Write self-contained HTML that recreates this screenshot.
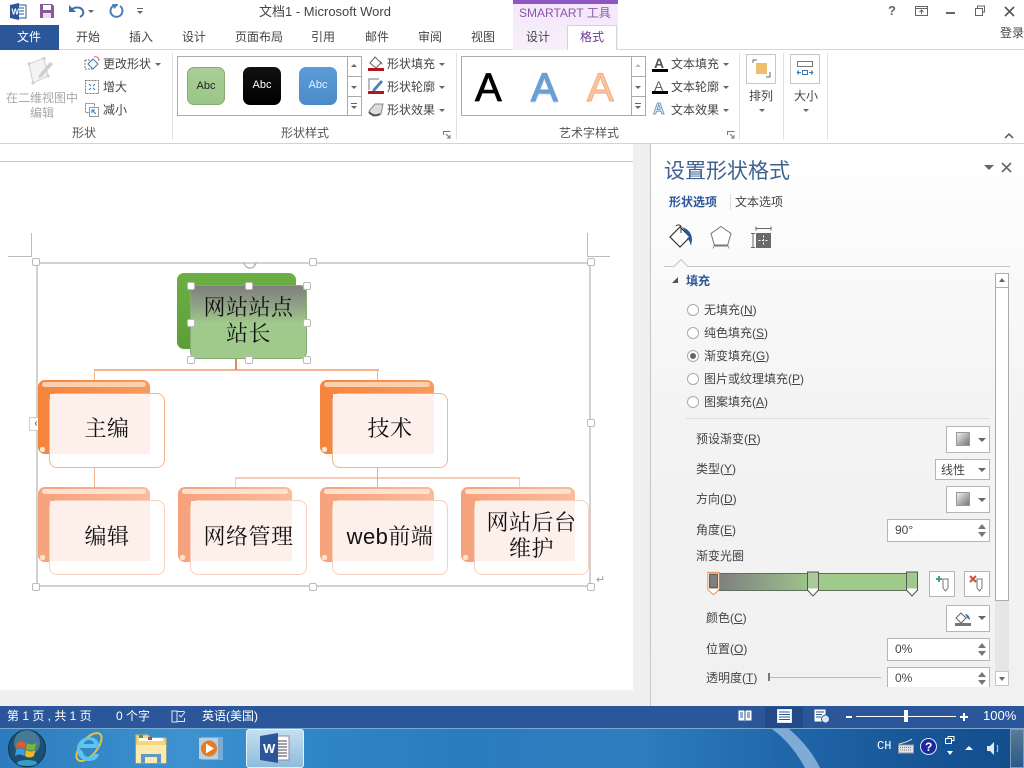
<!DOCTYPE html>
<html lang="zh"><head><meta charset="utf-8"><title>文档1 - Microsoft Word</title>
<style>
html,body{margin:0;padding:0;width:1024px;height:768px;overflow:hidden;background:#fff}
body{position:relative;font:12px/16px "Liberation Sans","Noto Sans CJK SC",sans-serif;color:#444}
div,svg{position:absolute;box-sizing:border-box}
.t{white-space:nowrap;height:16px}
u{text-decoration:underline}
.g{color:#a8a8a8}
.tab{top:29px}
.box{border:1px solid #ababab;background:#fff}
.sep{width:1px;top:53px;height:87px;background:#e1e1e1}
.lab{top:125px;color:#555;text-align:center}
.ar{width:0;height:0;border-left:3px solid transparent;border-right:3px solid transparent;border-top:3px solid #666}
.abc{width:38px;height:38px;border-radius:7px;text-align:center;line-height:36px;font-size:11px;top:67px}
.h{width:8px;height:8px;background:#fff;border:1px solid #bbb;border-radius:2px}
.back{border-radius:7px;overflow:hidden}
.front{border-radius:8px;background:#fff;border:1px solid #f2b58f}
.inner{background:#fdf0ea}
.sa{font:22px/26px "Noto Serif CJK SC","Noto Sans CJK SC",serif;color:#111;text-align:center;letter-spacing:.5px;white-space:nowrap}
.radio{width:12px;height:12px;border:1px solid #aaa;border-radius:50%;background:#fff;left:687px}
.bt{background:#fff;border:1px solid #b5b5b5}
.spin{left:887px;width:103px;background:#fff;border:1px solid #b5b5b5;padding-left:7px;line-height:20px}
.up,.dn{width:0;height:0;left:90px;border-left:4px solid transparent;border-right:4px solid transparent}
.up{top:4px;border-bottom:5px solid #777}.dn{top:12px;border-top:5px solid #777}
.stop{top:570px;width:13px;height:28px}
.w{color:#fff}
.cr{left:2px;width:5px;height:5px;border-radius:2px;background:#fde6c8}
</style></head><body>

<!-- Title bar / tabs -->
<div style="left:0;top:49px;width:1024px;height:1px;background:#d4d4d4"></div>
<div style="left:513px;top:0;width:105px;height:50px;background:linear-gradient(#f3e6fa,#f7f0fb)"></div>
<div style="left:513px;top:0;width:105px;height:4px;background:#8e56c4"></div>
<div style="left:567px;top:25px;width:50px;height:25px;background:#fff;border:1px solid #d4d4d4;border-bottom:0"></div>
<div style="left:0;top:25px;width:59px;height:25px;background:#2b579a"></div>

<svg style="left:9px;top:3px" width="18" height="17" viewBox="0 0 18 17"><rect x="5" y="2" width="12" height="13" fill="#fff" stroke="#2b579a"/><path d="M10 5h5M10 8h5M10 11h5" stroke="#2b579a"/><path d="M1 2l9-2v17l-9-2z" fill="#2b579a"/><text x="2.5" y="11.5" font-size="8" font-weight="bold" fill="#fff" font-family="Liberation Sans">W</text></svg>
<svg style="left:39px;top:3px" width="16" height="16" viewBox="0 0 16 16"><path d="M1 1h12l2 2v12H1z" fill="#87589e"/><rect x="4" y="2" width="8" height="5" fill="#fff"/><rect x="4" y="10" width="8" height="5" fill="#e8dcee"/></svg>
<svg style="left:68px;top:3px" width="18" height="16" viewBox="0 0 18 16"><path d="M3 7c3-3 10-4 12 1 1 3-1 5-3 6" fill="none" stroke="#3d6ea8" stroke-width="2"/><path d="M1 2v7h7z" fill="#3d6ea8"/></svg>
<div class="ar" style="left:88px;top:10px"></div>
<svg style="left:108px;top:3px" width="16" height="16" viewBox="0 0 16 16"><path d="M5 3a6 6 0 1 0 7 0" fill="none" stroke="#4a7fb8" stroke-width="2"/><path d="M4 1h6v1l-4 4z" fill="#4a7fb8"/></svg>
<div style="left:137px;top:8px;width:6px;height:1px;background:#666"></div>
<div class="ar" style="left:137px;top:11px"></div>

<div class="t" style="left:259px;top:4px;font-size:13px;color:#444">文档1 - Microsoft Word</div>
<div class="t" style="left:519px;top:5px;color:#8a56ad;font-size:12px">SMARTART 工具</div>

<div class="t" style="left:888px;top:3px;font-weight:bold;font-size:13px;color:#666">?</div>
<svg style="left:914px;top:5px" width="16" height="12" viewBox="0 0 16 12"><rect x="1.5" y="1.5" width="12" height="9" fill="none" stroke="#666"/><path d="M1 3.5h13" stroke="#666"/><path d="M7.5 9V5M5.5 7l2-2 2 2" fill="none" stroke="#666"/></svg>
<div style="left:946px;top:12px;width:9px;height:2px;background:#666"></div>
<svg style="left:974px;top:5px" width="12" height="12" viewBox="0 0 12 12"><path d="M3.5 3V1h7v6H8M1.5 3.5h7v7h-7z" fill="none" stroke="#666"/></svg>
<svg style="left:1004px;top:6px" width="11" height="11" viewBox="0 0 11 11"><path d="M1 1l9 9M10 1l-9 9" stroke="#555" stroke-width="1.6"/></svg>
<div class="t" style="left:1000px;top:25px">登录</div>

<div class="t tab w" style="left:17px">文件</div>
<div class="t tab" style="left:76px">开始</div>
<div class="t tab" style="left:129px">插入</div>
<div class="t tab" style="left:182px">设计</div>
<div class="t tab" style="left:235px">页面布局</div>
<div class="t tab" style="left:311px">引用</div>
<div class="t tab" style="left:365px">邮件</div>
<div class="t tab" style="left:418px">审阅</div>
<div class="t tab" style="left:471px">视图</div>
<div class="t tab" style="left:526px">设计</div>
<div class="t tab" style="left:580px;color:#6b3a96">格式</div>

<!-- Ribbon -->
<div style="left:0;top:143px;width:1024px;height:1px;background:#d4d4d4"></div>
<div class="sep" style="left:172px"></div>
<div class="sep" style="left:456px"></div>
<div class="sep" style="left:739px"></div>
<div class="sep" style="left:783px"></div>
<div class="sep" style="left:827px"></div>

<svg style="left:26px;top:56px" width="30" height="30" viewBox="0 0 30 30"><path d="M3 8l15-6 4 18-15 7z" fill="#f4f4f4" stroke="#d0d0d0"/><path d="M13 19l11-13 3 2-11 13-4 1z" fill="#cfcfcf"/><circle cx="3" cy="8" r="1.6" fill="#cfcfcf"/><circle cx="18" cy="2.5" r="1.6" fill="#cfcfcf"/><circle cx="7" cy="27" r="1.6" fill="#cfcfcf"/><circle cx="22" cy="20" r="1.6" fill="#cfcfcf"/></svg>
<div class="t g" style="left:6px;top:90px">在二维视图中</div>
<div class="t g" style="left:30px;top:105px">编辑</div>
<svg style="left:84px;top:56px" width="16" height="16" viewBox="0 0 16 16"><path d="M1 4h6M1 4v9h7" fill="none" stroke="#777" stroke-dasharray="2 1"/><path d="M9 3l5 5-5 5-5-5z" fill="#fff" stroke="#3a78b0"/><path d="M10 1c3-1 5 1 5 4" fill="none" stroke="#c96a50"/></svg>
<div class="t" style="left:103px;top:56px">更改形状</div><div class="ar" style="left:155px;top:63px"></div>
<svg style="left:84px;top:79px" width="16" height="16" viewBox="0 0 16 16"><rect x="1.5" y="1.5" width="13" height="13" fill="none" stroke="#777" stroke-dasharray="2 1"/><path d="M5 5l2 2M11 5L9 7M5 11l2-2M11 11L9 9" stroke="#3a78b0"/></svg>
<div class="t" style="left:103px;top:79px">增大</div>
<svg style="left:84px;top:102px" width="16" height="16" viewBox="0 0 16 16"><path d="M1.5 1.5h9v9h-9z" fill="none" stroke="#777" stroke-dasharray="2 1"/><rect x="5.5" y="5.5" width="9" height="9" fill="#fff" stroke="#999"/><path d="M12 12L8 8M8 11V8h3" fill="none" stroke="#3a78b0"/></svg>
<div class="t" style="left:103px;top:102px">减小</div>
<div class="t lab" style="left:72px">形状</div>

<div class="box" style="left:177px;top:56px;width:185px;height:60px"></div>
<div class="abc" style="left:187px;background:linear-gradient(#a8cf97,#9bc588);border:1px solid #86ab74;color:#222">Abc</div>
<div class="abc" style="left:243px;background:linear-gradient(#111,#000);color:#fff">Abc</div>
<div class="abc" style="left:299px;background:linear-gradient(#5b9cd8,#4a8bc8);color:#eaf3fb">Abc</div>
<div class="box" style="left:347px;top:56px;width:15px;height:21px"></div>
<div class="box" style="left:347px;top:77px;width:15px;height:20px;border-top:0"></div>
<div class="box" style="left:347px;top:96px;width:15px;height:20px"></div>
<div style="left:351px;top:64px;border-left:3px solid transparent;border-right:3px solid transparent;border-bottom:3px solid #666"></div>
<div class="ar" style="left:351px;top:86px"></div>
<div style="left:351px;top:103px;width:6px;height:1px;background:#666"></div><div class="ar" style="left:351px;top:106px"></div>

<svg style="left:368px;top:55px" width="17" height="17" viewBox="0 0 17 17"><path d="M2 8l5-6 6 6-5 5z" fill="#fff" stroke="#666"/><path d="M12 6c2 1 3 3 2 4z" fill="#3d6ea8"/><rect x="0" y="13" width="16" height="3" fill="#b5141c"/></svg>
<div class="t" style="left:387px;top:56px">形状填充</div><div class="ar" style="left:439px;top:63px"></div>
<svg style="left:368px;top:78px" width="17" height="17" viewBox="0 0 17 17"><path d="M1 12V1h10" fill="none" stroke="#777"/><path d="M5 11l8-9 2 2-8 9-3 1z" fill="#4a7fb8"/><rect x="0" y="13" width="16" height="3" fill="#b5141c"/></svg>
<div class="t" style="left:387px;top:79px">形状轮廓</div><div class="ar" style="left:439px;top:86px"></div>
<svg style="left:368px;top:102px" width="16" height="16" viewBox="0 0 16 16"><path d="M1 9l6-7h8l-2 10-8 2z" fill="#ddd" stroke="#888"/><path d="M1 10c3 4 8 4 11 2" fill="none" stroke="#555" stroke-width="2"/></svg>
<div class="t" style="left:387px;top:102px">形状效果</div><div class="ar" style="left:439px;top:109px"></div>
<div class="t lab" style="left:281px">形状样式</div>
<svg style="left:443px;top:131px" width="8" height="8" viewBox="0 0 8 8"><path d="M.5 4V.5H7.500M3 3l4 4M4 7h3V4" fill="none" stroke="#777"/></svg>

<div class="box" style="left:461px;top:56px;width:185px;height:60px"></div>
<div class="t" style="left:475px;top:66px;height:44px;font-size:40px;line-height:44px;color:#000;-webkit-text-stroke:.8px #000">A</div>
<div class="t" style="left:531px;top:66px;height:44px;font-size:40px;line-height:44px;color:#6a9fd0;-webkit-text-stroke:1.2px #6a9fd0;text-shadow:0 1px 2px #9cc3e6">A</div>
<div class="t" style="left:587px;top:66px;height:44px;font-size:40px;line-height:44px;color:#f9c6a2;-webkit-text-stroke:1.2px #f3b288">A</div>
<div class="box" style="left:631px;top:56px;width:15px;height:21px"></div>
<div class="box" style="left:631px;top:77px;width:15px;height:20px;border-top:0"></div>
<div class="box" style="left:631px;top:96px;width:15px;height:20px"></div>
<div style="left:635px;top:64px;border-left:3px solid transparent;border-right:3px solid transparent;border-bottom:3px solid #bbb"></div>
<div class="ar" style="left:635px;top:86px"></div>
<div style="left:635px;top:103px;width:6px;height:1px;background:#666"></div><div class="ar" style="left:635px;top:106px"></div>

<div class="t" style="left:654px;top:55px;font-size:14px;font-weight:bold;color:#555">A</div>
<div style="left:652px;top:69px;width:16px;height:3px;background:#000"></div>
<div class="t" style="left:671px;top:56px">文本填充</div><div class="ar" style="left:723px;top:63px"></div>
<div class="t" style="left:654px;top:78px;font-size:14px;color:#666">A</div>
<div style="left:652px;top:91px;width:16px;height:3px;background:#000"></div>
<div class="t" style="left:671px;top:79px">文本轮廓</div><div class="ar" style="left:723px;top:86px"></div>
<div class="t" style="left:653px;top:102px;font-size:16px;font-weight:bold;color:#d8e8f6;-webkit-text-stroke:.7px #4f87bd">A</div>
<div class="t" style="left:671px;top:102px">文本效果</div><div class="ar" style="left:723px;top:109px"></div>
<div class="t lab" style="left:559px">艺术字样式</div>
<svg style="left:727px;top:131px" width="8" height="8" viewBox="0 0 8 8"><path d="M.5 4V.5H7.500M3 3l4 4M4 7h3V4" fill="none" stroke="#777"/></svg>

<div class="box" style="left:746px;top:54px;width:30px;height:30px;border-color:#c6c6c6"></div>
<svg style="left:752px;top:59px" width="20" height="20" viewBox="0 0 20 20"><path d="M1 4V1h4M18 13v5h-4" fill="none" stroke="#666"/><rect x="4" y="4" width="11" height="11" fill="#eebd6e"/></svg>
<div class="t" style="left:749px;top:88px">排列</div><div class="ar" style="left:759px;top:109px"></div>
<div class="box" style="left:790px;top:54px;width:30px;height:30px;border-color:#c6c6c6"></div>
<svg style="left:796px;top:60px" width="18" height="18" viewBox="0 0 18 18"><rect x="1.500" y="1.500" width="15" height="5" fill="#fff" stroke="#777"/><rect x="6.500" y="10.500" width="5" height="4" fill="none" stroke="#3a78b0"/><path d="M1 12.500h4M13 12.500h4M1 12.500l2-2M1 12.500l2 2M17 12.500l-2-2M17 12.500l-2 2" stroke="#3a78b0" fill="none"/></svg>
<div class="t" style="left:794px;top:88px">大小</div><div class="ar" style="left:803px;top:109px"></div>
<svg style="left:1004px;top:132px" width="10" height="7" viewBox="0 0 10 7"><path d="M1 6l4-4 4 4" fill="none" stroke="#555" stroke-width="1.500"/></svg>

<!-- Document area -->
<div style="left:633px;top:144px;width:18px;height:562px;background:#efefef"></div>
<div style="left:0;top:690px;width:651px;height:16px;background:#efefef"></div>
<div style="left:0;top:161px;width:633px;height:1px;background:#c9c9c9"></div>
<div style="left:8px;top:256px;width:23px;height:1px;background:#bbb"></div>
<div style="left:31px;top:233px;width:1px;height:24px;background:#bbb"></div>
<div style="left:587px;top:256px;width:23px;height:1px;background:#bbb"></div>
<div style="left:587px;top:233px;width:1px;height:24px;background:#bbb"></div>

<!-- SmartArt frame -->
<div style="left:36px;top:262px;width:555px;height:325px;border:2px solid #d2d2d2;background:#fff"></div>
<div class="h" style="left:32px;top:258px"></div><div class="h" style="left:309px;top:258px"></div><div class="h" style="left:587px;top:258px"></div>
<div class="h" style="left:587px;top:419px"></div>
<div class="h" style="left:32px;top:583px"></div><div class="h" style="left:309px;top:583px"></div><div class="h" style="left:587px;top:583px"></div>
<div style="left:29px;top:417px;width:14px;height:14px;background:#fff;border:1px solid #ccc;color:#777;font-size:10px;line-height:12px;text-align:center;font-weight:bold">‹</div>
<svg style="left:242px;top:262px" width="16" height="10" viewBox="0 0 16 10"><path d="M2 0a6 6 0 0 0 12 0M12 3l2-2" fill="none" stroke="#bbb" stroke-width="1.500"/></svg>
<div style="left:596px;top:574px;color:#999;font-size:11px;line-height:12px">↵</div>

<!-- Connectors -->
<div style="left:94px;top:369px;width:285px;height:2px;background:#f0b493"></div>
<div style="left:235px;top:359px;width:2px;height:11px;background:#e8885a"></div>
<div style="left:94px;top:370px;width:1px;height:12px;background:#f0b493"></div>
<div style="left:377px;top:370px;width:1px;height:12px;background:#f0b493"></div>
<div style="left:94px;top:467px;width:1px;height:22px;background:#f0b493"></div>
<div style="left:235px;top:477px;width:285px;height:2px;background:#f6cdb6"></div>
<div style="left:377px;top:467px;width:1px;height:22px;background:#eba98a"></div>
<div style="left:235px;top:478px;width:1px;height:10px;background:#f6cdb6"></div>
<div style="left:519px;top:478px;width:1px;height:10px;background:#f6cdb6"></div>

<!-- Top node -->
<div class="back" style="left:177px;top:273px;width:119px;height:76px;background:linear-gradient(#6cb044,#5a9e36)"></div>
<div style="left:190px;top:285px;width:117px;height:74px;border-radius:7px;border:1px solid #86ab74;background:linear-gradient(#7f7f7f 0%,#8f9f84 25%,#a0c98c 52%,#a0c98c 100%)"></div>
<div class="sa" style="left:190px;top:294px;width:117px">网站站点</div>
<div class="sa" style="left:190px;top:320px;width:117px">站长</div>
<div class="h" style="left:187px;top:282px"></div><div class="h" style="left:245px;top:282px"></div><div class="h" style="left:303px;top:282px"></div>
<div class="h" style="left:187px;top:319px"></div><div class="h" style="left:303px;top:319px"></div>
<div class="h" style="left:187px;top:356px"></div><div class="h" style="left:245px;top:356px"></div><div class="h" style="left:303px;top:356px"></div>

<!-- Row 2 -->
<div class="back" style="left:38px;top:380px;width:112px;height:74px;background:linear-gradient(90deg,#f5843c,#f89a5e)"><div style="left:4px;top:2px;width:104px;height:5px;border-radius:3px;background:#fbd0ae"></div><div class="cr" style="top:67px"></div></div>
<div class="front" style="left:49px;top:393px;width:116px;height:75px"></div>
<div class="inner" style="left:50px;top:394px;width:100px;height:60px"></div>
<div class="sa" style="left:49px;top:415px;width:116px">主编</div>

<div class="back" style="left:320px;top:380px;width:114px;height:74px;background:linear-gradient(90deg,#f5843c,#f89a5e)"><div style="left:4px;top:2px;width:106px;height:5px;border-radius:3px;background:#fbd0ae"></div><div class="cr" style="top:67px"></div></div>
<div class="front" style="left:332px;top:393px;width:116px;height:75px"></div>
<div class="inner" style="left:333px;top:394px;width:101px;height:60px"></div>
<div class="sa" style="left:332px;top:415px;width:116px">技术</div>

<!-- Row 3 -->
<div class="back" style="left:38px;top:487px;width:112px;height:75px;background:linear-gradient(90deg,#f6a17c,#fabb9d)"><div style="left:4px;top:2px;width:104px;height:5px;border-radius:3px;background:#fde0cd"></div><div class="cr" style="top:68px"></div></div>
<div class="front" style="left:49px;top:500px;width:116px;height:75px;border-color:#f7d0bb"></div>
<div class="inner" style="left:50px;top:501px;width:100px;height:60px"></div>
<div class="sa" style="left:49px;top:523px;width:116px">编辑</div>

<div class="back" style="left:178px;top:487px;width:114px;height:75px;background:linear-gradient(90deg,#f6a17c,#fabb9d)"><div style="left:4px;top:2px;width:106px;height:5px;border-radius:3px;background:#fde0cd"></div><div class="cr" style="top:68px"></div></div>
<div class="front" style="left:190px;top:500px;width:117px;height:75px;border-color:#f7d0bb"></div>
<div class="inner" style="left:191px;top:501px;width:101px;height:60px"></div>
<div class="sa" style="left:190px;top:523px;width:117px">网络管理</div>

<div class="back" style="left:320px;top:487px;width:114px;height:75px;background:linear-gradient(90deg,#f6a17c,#fabb9d)"><div style="left:4px;top:2px;width:106px;height:5px;border-radius:3px;background:#fde0cd"></div><div class="cr" style="top:68px"></div></div>
<div class="front" style="left:332px;top:500px;width:116px;height:75px;border-color:#f7d0bb"></div>
<div class="inner" style="left:333px;top:501px;width:101px;height:60px"></div>
<div class="sa" style="left:332px;top:523px;width:116px"><span style="font-family:'Liberation Sans',sans-serif">web</span>前端</div>

<div class="back" style="left:461px;top:487px;width:114px;height:75px;background:linear-gradient(90deg,#f6a17c,#fabb9d)"><div style="left:4px;top:2px;width:106px;height:5px;border-radius:3px;background:#fde0cd"></div><div class="cr" style="top:68px"></div></div>
<div class="front" style="left:474px;top:500px;width:115px;height:75px;border-color:#f7d0bb"></div>
<div class="inner" style="left:475px;top:501px;width:100px;height:60px"></div>
<div class="sa" style="left:474px;top:509px;width:115px">网站后台</div>
<div class="sa" style="left:474px;top:535px;width:115px">维护</div>

<!-- Right pane -->
<div style="left:650px;top:144px;width:374px;height:562px;background:linear-gradient(#fff,#f3f3f3 50%,#f1f1f1);border-left:1px solid #c6c6c6"></div>
<div class="t" style="left:664px;top:158px;height:28px;font-size:21px;line-height:28px;color:#3f6391">设置形状格式</div>
<div class="ar" style="left:984px;top:165px;border-left-width:5px;border-right-width:5px;border-top-width:5px"></div>
<svg style="left:1001px;top:162px" width="11" height="11" viewBox="0 0 11 11"><path d="M1 1l9 9M10 1l-9 9" stroke="#666" stroke-width="1.600"/></svg>
<div class="t" style="left:669px;top:194px;font-weight:bold;color:#2b579a">形状选项</div>
<div style="left:730px;top:194px;width:1px;height:16px;background:#ddd"></div>
<div class="t" style="left:735px;top:194px">文本选项</div>
<svg style="left:668px;top:224px" width="26" height="26" viewBox="0 0 26 26"><path d="M2 13l10-10 10 10-10 10z" fill="#fff" stroke="#333" stroke-width="1.200"/><path d="M8 2c2-2 5-1 5 1v6" fill="none" stroke="#333"/><path d="M14 3c6 2 10 6 10 13l-1 6c-1-4-2-6-4-8l2-1z" fill="#2b579a"/></svg>
<svg style="left:709px;top:225px" width="24" height="24" viewBox="0 0 24 24"><path d="M12 1.500l10 7-3.500 12h-13L2 8.500z" fill="#fff" stroke="#777"/><path d="M5 20.500h14" stroke="#777" stroke-width="2"/><path d="M5 20.500l-1 3M19 20.500l1 3" stroke="#999"/></svg>
<svg style="left:750px;top:226px" width="22" height="23" viewBox="0 0 22 23"><path d="M6 2.500h15M6 .5v4M21 .500v4M1 7.500h4M1 21.500h4M3 7.500v14" fill="none" stroke="#666"/><rect x="6" y="7" width="15" height="15" fill="#6a6a6a"/><path d="M13.500 9.500v10M8.500 14.500h10" stroke="#fff" stroke-dasharray="2 1.500"/></svg>
<svg style="left:664px;top:256px" width="346" height="11" viewBox="0 0 346 11"><path d="M0 10.500h10l7-7 7 7h322" fill="none" stroke="#c4c4c4"/></svg>
<div style="left:672px;top:277px;border-left:6px solid transparent;border-bottom:6px solid #555"></div>
<div class="t" style="left:686px;top:273px;font-weight:bold;color:#2b579a">填充</div>

<div class="radio" style="top:304px"></div><div class="t" style="left:704px;top:302px">无填充(<u>N</u>)</div>
<div class="radio" style="top:327px"></div><div class="t" style="left:704px;top:325px">纯色填充(<u>S</u>)</div>
<div class="radio" style="top:350px"></div><div style="left:690px;top:353px;width:6px;height:6px;border-radius:50%;background:#666"></div><div class="t" style="left:704px;top:348px">渐变填充(<u>G</u>)</div>
<div class="radio" style="top:373px"></div><div class="t" style="left:704px;top:371px">图片或纹理填充(<u>P</u>)</div>
<div class="radio" style="top:396px"></div><div class="t" style="left:704px;top:394px">图案填充(<u>A</u>)</div>
<div style="left:686px;top:418px;width:304px;height:1px;background:#dedede"></div>

<div class="t" style="left:696px;top:431px">预设渐变(<u>R</u>)</div>
<div class="bt" style="left:946px;top:426px;width:44px;height:27px"></div>
<div style="left:956px;top:432px;width:14px;height:14px;background:linear-gradient(135deg,#eee,#777);border:1px solid #999"></div><div class="ar" style="left:978px;top:438px;border-left-width:4px;border-right-width:4px;border-top-width:4px"></div>
<div class="t" style="left:696px;top:461px">类型(<u>Y</u>)</div>
<div class="bt" style="left:935px;top:459px;width:55px;height:21px;padding-left:5px;line-height:20px">线性</div><div class="ar" style="left:978px;top:468px;border-left-width:4px;border-right-width:4px;border-top-width:4px"></div>
<div class="t" style="left:696px;top:491px">方向(<u>D</u>)</div>
<div class="bt" style="left:946px;top:486px;width:44px;height:27px"></div>
<div style="left:956px;top:492px;width:14px;height:14px;background:linear-gradient(135deg,#eee,#777);border:1px solid #999"></div><div class="ar" style="left:978px;top:498px;border-left-width:4px;border-right-width:4px;border-top-width:4px"></div>
<div class="t" style="left:696px;top:522px">角度(<u>E</u>)</div>
<div class="spin" style="top:519px;height:23px">90°<div class="up"></div><div class="dn"></div></div>
<div class="t" style="left:696px;top:548px">渐变光圈</div>

<div style="left:714px;top:573px;width:204px;height:18px;border:1px solid #5d6e5a;background:linear-gradient(90deg,#7f7f7f 0%,#7f7f7f 2%,#a0c98c 50%,#a0c98c 100%)"></div>
<svg class="stop" style="left:707px" width="15" height="29" viewBox="0 0 15 29"><path d="M1 1h13v20l-6.500 6L1 21z" fill="#fff" stroke="#e8833a"/><rect x="3" y="3" width="9" height="16" fill="#7f7f7f" stroke="#444"/></svg>
<svg class="stop" style="left:807px;top:571px" width="13" height="27" viewBox="0 0 13 27"><path d="M.5 .5h11v18l-5.500 6-5.500-6z" fill="#fff" stroke="#555"/><rect x="1" y="1" width="10" height="16" fill="#a9cb99"/></svg>
<svg class="stop" style="left:906px;top:571px" width="13" height="27" viewBox="0 0 13 27"><path d="M.5 .5h11v18l-5.500 6-5.500-6z" fill="#fff" stroke="#555"/><rect x="1" y="1" width="10" height="16" fill="#a0c98c"/></svg>
<div class="bt" style="left:929px;top:571px;width:26px;height:26px"></div>
<svg style="left:935px;top:575px" width="15" height="18" viewBox="0 0 15 18"><path d="M8 4h5v9l-2.500 3L8 13z" fill="#fff" stroke="#777"/><path d="M4 1v6M1 4h6" stroke="#4d9a86" stroke-width="2"/></svg>
<div class="bt" style="left:964px;top:571px;width:26px;height:26px"></div>
<svg style="left:969px;top:575px" width="15" height="18" viewBox="0 0 15 18"><path d="M8 4h5v9l-2.500 3L8 13z" fill="#fff" stroke="#777"/><path d="M1 1l6 6M7 1L1 7" stroke="#c8503c" stroke-width="2"/></svg>
<div class="t" style="left:706px;top:610px">颜色(<u>C</u>)</div>
<div class="bt" style="left:946px;top:605px;width:44px;height:27px"></div>
<svg style="left:955px;top:610px" width="17" height="17" viewBox="0 0 17 17"><path d="M1 8l5-5 5 5-5 5z" fill="#fff" stroke="#666"/><path d="M10 4c3 0 5 3 5 6l-3-2z" fill="#4e74a8"/><rect x="0" y="13" width="16" height="3" fill="#777"/></svg>
<div class="ar" style="left:978px;top:616px;border-left-width:4px;border-right-width:4px;border-top-width:4px"></div>
<div class="t" style="left:706px;top:641px">位置(<u>O</u>)</div>
<div class="spin" style="top:638px;height:23px">0%<div class="up"></div><div class="dn"></div></div>
<div class="t" style="left:706px;top:670px">透明度(<u>T</u>)</div>
<div style="left:768px;top:673px;width:2px;height:8px;background:#777"></div>
<div style="left:770px;top:677px;width:111px;height:1px;background:#bbb"></div>
<div class="spin" style="top:667px;height:20px;border-bottom:0">0%<div class="up"></div><div class="dn"></div></div>

<!-- Pane scrollbar -->
<div style="left:995px;top:273px;width:14px;height:413px;background:#e6e6e6"></div>
<div style="left:995px;top:273px;width:14px;height:328px;background:#fff;border:1px solid #ababab"></div>
<div style="left:995px;top:273px;width:14px;height:15px;background:#fff;border:1px solid #ababab"></div>
<div style="left:999px;top:278px;border-left:3px solid transparent;border-right:3px solid transparent;border-bottom:4px solid #666"></div>
<div style="left:995px;top:671px;width:14px;height:15px;background:#fff;border:1px solid #c6c6c6"></div>
<div class="ar" style="left:999px;top:677px;border-top-width:4px"></div>

<!-- Status bar -->
<div style="left:0;top:706px;width:1024px;height:22px;background:#2b579a"></div>
<div class="t w" style="left:7px;top:708px">第 1 页 , 共 1 页</div>
<div class="t w" style="left:116px;top:708px">0 个字</div>
<svg style="left:171px;top:710px" width="15" height="13" viewBox="0 0 15 13"><path d="M1 1h5v11H1zM6.500 1.500h7M6.500 11.500h7M13.500 8v4" fill="none" stroke="#dfe7f3"/><path d="M8 5l2 2 4-5" fill="none" stroke="#dfe7f3"/></svg>
<div class="t w" style="left:202px;top:708px">英语(美国)</div>
<svg style="left:738px;top:709px" width="14" height="14" viewBox="0 0 14 14"><path d="M.5 1.500h5.500l1 1 1-1h5.500v10H8l-1 1-1-1H.5z" fill="#fff"/><path d="M2 4h3M2 6h3M2 8h3M9 4h3M9 6h3M9 8h3M7 2v10" stroke="#2b579a" fill="none"/></svg>
<div style="left:765px;top:707px;width:38px;height:21px;background:#224a87"></div>
<svg style="left:777px;top:709px" width="15" height="14" viewBox="0 0 15 14"><rect x=".5" y=".5" width="14" height="13" fill="#fff" stroke="#dfe7f3"/><path d="M2 3h11M2 5.500h11M2 8h11M2 10.500h11" stroke="#2b579a"/></svg>
<svg style="left:814px;top:709px" width="16" height="15" viewBox="0 0 16 15"><rect x=".5" y=".5" width="11" height="12" fill="#fff"/><path d="M2 3h8M2 5.500h6M2 8h5" stroke="#2b579a"/><circle cx="11.500" cy="10" r="4" fill="#dfe7f3" stroke="#2b579a"/></svg>
<div style="left:846px;top:716px;width:6px;height:2px;background:#fff"></div>
<div style="left:856px;top:716px;width:100px;height:1px;background:#fff"></div>
<div style="left:904px;top:710px;width:4px;height:12px;background:#fff"></div>
<div style="left:960px;top:716px;width:8px;height:2px;background:#fff"></div><div style="left:963px;top:713px;width:2px;height:8px;background:#fff"></div>
<div class="t w" style="left:983px;top:708px;font-size:13px">100%</div>

<!-- Taskbar -->
<div style="left:0;top:728px;width:1024px;height:40px;background:linear-gradient(90deg,#2c7cbd 0%,#3d92cf 18%,#2f86c8 30%,#2a7cc0 45%,#2e7dbd 62%,#1f65a8 78%,#175596 90%,#134d8c 100%);border-top:1px solid #7aa9d0"></div>
<svg style="left:772px;top:729px" width="50" height="39" viewBox="0 0 50 39"><path d="M0 0h17c12 10 24 24 31 39H33C25 24 14 10 0 0z" fill="#a7cbe8" opacity=".7"/></svg>

<svg style="left:7px;top:729px" width="40" height="39" viewBox="0 0 40 39"><circle cx="20" cy="19.500" r="18.500" fill="#1d4f72" stroke="#0f3450"/><circle cx="20" cy="14" r="13" fill="#5a8aa5" opacity=".7"/><path d="M10 14c3-2 6-2 9 0l-1 6c-3-2-6-2-9 0z" fill="#e05a2a"/><path d="M20 14c3 2 6 2 9 0l-1 6c-3 2-6 2-9 0z" fill="#7ab82e"/><path d="M9 21c3-2 6-2 9 0l-1 6c-3-2-6-2-9 0z" fill="#3d9be0"/><path d="M19 21c3 2 6 2 9 0l-1 6c-3 2-6 2-9 0z" fill="#f4b81e"/><ellipse cx="20" cy="34" rx="10" ry="3" fill="#3db0d8" opacity=".8"/></svg>
<svg style="left:73px;top:730px" width="32" height="34" viewBox="0 0 32 34"><ellipse cx="16" cy="17" rx="17" ry="8" transform="rotate(-50 16 17)" fill="none" stroke="#e6c33c" stroke-width="2"/><path d="M6 18h20c1-7-4-11-10-11S4 12 4 19c0 8 6 12 12 12 5 0 9-2 10-7h-6c-1 2-2 3-4 3-3 0-6-2-6-5zM11 14c0-2 2-4 5-4s5 2 5 4z" fill="#5dc4ee" fill-rule="evenodd"/></svg>
<svg style="left:134px;top:733px" width="34" height="32" viewBox="0 0 34 32"><path d="M2 2h12l2 3h16v25H2z" fill="#f3d67e" stroke="#d6b45c"/><rect x="5" y="5" width="24" height="3" fill="#fff"/><path d="M2 12h30v18H2z" fill="#fbe9ae"/><rect x="5" y="2" width="4" height="3" fill="#4a9c4a"/><rect x="14" y="4" width="4" height="3" fill="#c04a3a"/><path d="M7 30v-9h20v9h-4v-6H11v6z" fill="#5b9ac4"/></svg>
<svg style="left:199px;top:736px" width="26" height="25" viewBox="0 0 26 25"><rect x="2" y="1" width="22" height="23" fill="#8db4d4" opacity=".8"/><rect x="0" y="2" width="19" height="21" fill="#b8cfe2"/><circle cx="10" cy="12.500" r="8" fill="#e87a20"/><path d="M7 7.500l8 5-8 5z" fill="#fff"/></svg>
<div style="left:246px;top:729px;width:58px;height:39px;background:linear-gradient(#c5dff0,#8fbcdc);border:1px solid #e4f0f8;border-radius:3px"></div>
<svg style="left:259px;top:733px" width="32" height="30" viewBox="0 0 32 30"><rect x="14" y="3" width="16" height="24" fill="#fff" stroke="#88a"/><path d="M18 8h10M18 11h10M18 14h10M18 17h10M18 20h10M18 23h10" stroke="#445"/><path d="M1 3l18-3v30l-18-3z" fill="#2b579a"/><text x="4" y="20" font-size="13" font-weight="bold" fill="#fff" font-family="Liberation Sans">W</text></svg>

<div class="t" style="left:877px;top:738px;font-family:'Liberation Mono',monospace;font-size:12px;color:#fff">CH</div>
<svg style="left:898px;top:738px" width="16" height="16" viewBox="0 0 16 16"><path d="M1 6c4-1 9-2 13-5" fill="none" stroke="#ddd"/><rect x=".5" y="7" width="15" height="8" fill="#e4e4e4" stroke="#999"/><path d="M2 9.500h12M2 12h12" stroke="#777" stroke-dasharray="1 1"/></svg>
<svg style="left:920px;top:738px" width="17" height="17" viewBox="0 0 17 17"><circle cx="8.500" cy="8.500" r="8" fill="#1a2a9a" stroke="#dfe7f3"/><text x="5" y="13" font-size="12" font-weight="bold" fill="#fff" font-family="Liberation Sans">?</text></svg>
<svg style="left:945px;top:736px" width="10" height="8" viewBox="0 0 10 8"><path d="M3 2.500V.5h6v4H7M.5 2.500h6v5h-6z" fill="none" stroke="#fff"/></svg>
<div class="ar" style="left:947px;top:751px;border-top-color:#fff;border-top-width:4px"></div>
<div style="left:965px;top:746px;border-left:4px solid transparent;border-right:4px solid transparent;border-bottom:4px solid #fff"></div>
<svg style="left:987px;top:742px" width="14" height="13" viewBox="0 0 14 13"><path d="M0 4h3l4-4v13l-4-4H0z" fill="#e8e8e8"/><path d="M10 3c1 2 1 5 0 7" fill="none" stroke="#c8d8e8"/></svg>
<div style="left:1010px;top:729px;width:14px;height:39px;background:linear-gradient(#5b7a96,#2a5a88);border:1px solid #7f9cb5"></div>

</body></html>
